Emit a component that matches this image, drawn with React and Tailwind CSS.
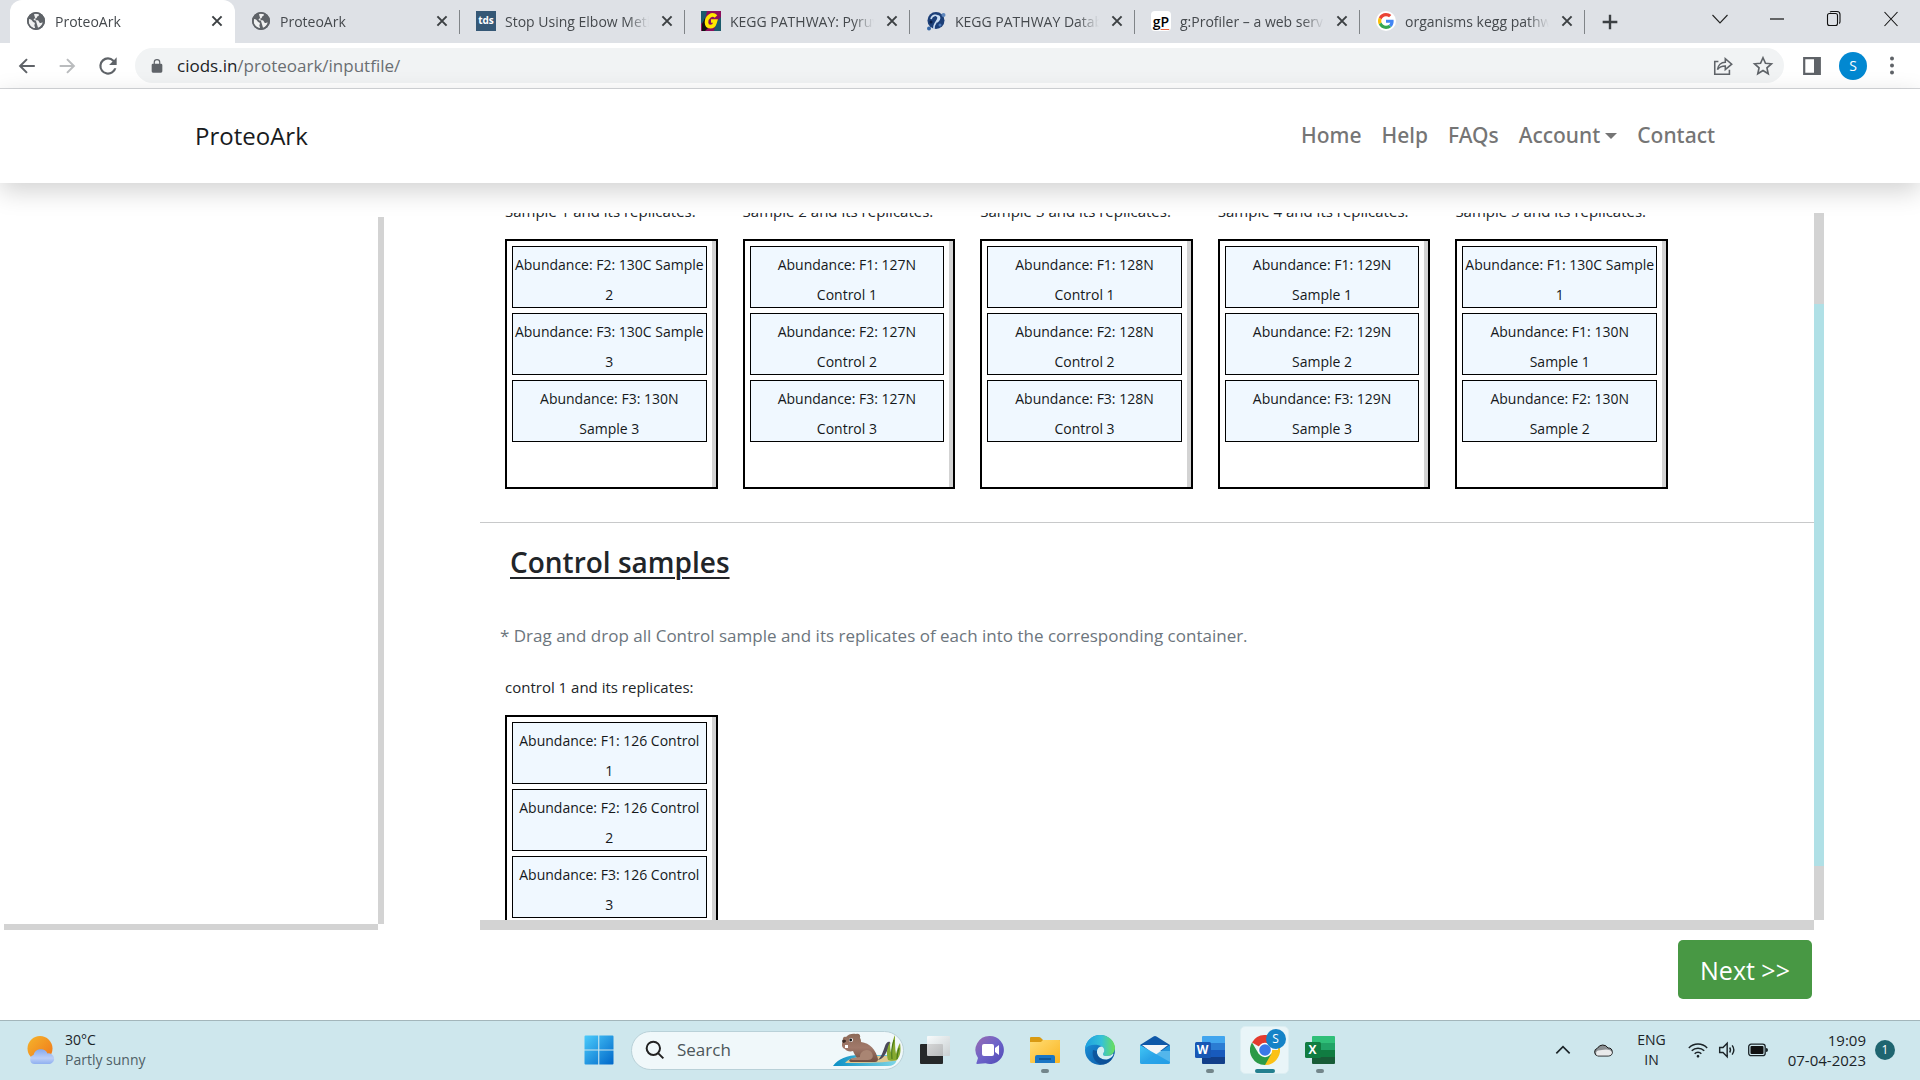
const tabs = [
  { icon: 'globe', title: 'ProteoArk', active: true },
  { icon: 'globe', title: 'ProteoArk' },
  { icon: 'tds', title: 'Stop Using Elbow Method in K' },
  { icon: 'kegg', title: 'KEGG PATHWAY: Pyruvate met' },
  { icon: 'keggdb', title: 'KEGG PATHWAY Database' },
  { icon: 'gp', title: 'g:Profiler – a web server for f' },
  { icon: 'google', title: 'organisms kegg pathway' },
];

const samples = [
  { label: 'Sample 1 and its replicates:', items: [['Abundance: F2: 130C Sample', '2'], ['Abundance: F3: 130C Sample', '3'], ['Abundance: F3: 130N', 'Sample 3']] },
  { label: 'Sample 2 and its replicates:', items: [['Abundance: F1: 127N', 'Control 1'], ['Abundance: F2: 127N', 'Control 2'], ['Abundance: F3: 127N', 'Control 3']] },
  { label: 'Sample 3 and its replicates:', items: [['Abundance: F1: 128N', 'Control 1'], ['Abundance: F2: 128N', 'Control 2'], ['Abundance: F3: 128N', 'Control 3']] },
  { label: 'Sample 4 and its replicates:', items: [['Abundance: F1: 129N', 'Sample 1'], ['Abundance: F2: 129N', 'Sample 2'], ['Abundance: F3: 129N', 'Sample 3']] },
  { label: 'Sample 5 and its replicates:', items: [['Abundance: F1: 130C Sample', '1'], ['Abundance: F1: 130N', 'Sample 1'], ['Abundance: F2: 130N', 'Sample 2']] },
];

const controls = [
  { label: 'control 1 and its replicates:', items: [['Abundance: F1: 126 Control', '1'], ['Abundance: F2: 126 Control', '2'], ['Abundance: F3: 126 Control', '3']] },
];

function Favicon({ kind }) {
  if (kind === 'globe')
    return (
      <svg viewBox="0 0 20 20" className="size-5 shrink-0">
        <circle cx="10" cy="10" r="9" fill="#5f6368" />
        <path d="M3 8c2 .2 3 1 3.500 2.200.5 1 1.800.8 2.300 1.800.4 1-.6 1.700-.4 2.800.1.900.9 1.300.6 2.300C5.500 17 2.800 14 2.700 10.500zM8 3.200c1.500-.6 3.500-.5 5 .2.300 1.200-.9 1.500-1.700 2.100-.6.5-.2 1.400-1 1.800-.9.4-1.900-.1-2.500.7-.5.8.4 1.400 1.300 1.400 1.300 0 2.300-.4 3.300.4.900.8.5 1.900 1.600 2.200.9.200 1.600-.6 2.700-.6-.6 2.500-2.400 4.600-4.700 5.300" fill="#fff" opacity=".9" />
        <circle cx="10" cy="10" r="8.200" fill="none" stroke="#5f6368" strokeWidth="1.600" />
      </svg>
    );
  if (kind === 'tds')
    return <span className="flex size-5 shrink-0 items-center justify-center bg-[#355876] pb-px text-[10px] font-bold text-white">tds</span>;
  if (kind === 'gp')
    return (
      <span className="flex size-5 shrink-0 items-center justify-center rounded-sm bg-white text-[14px] font-semibold text-black">
        g<span className="underline decoration-[#e8603c] underline-offset-2">P</span>
      </span>
    );
  if (kind === 'kegg')
    return (
      <svg viewBox="0 0 20 20" className="size-5 shrink-0">
        <path fill="#8c0f5c" d="M0 0h20v20H0z" />
        <path fill="#1c5b6c" d="M0 0h6L4 9l-4 4zM15 11l5-5v14h-7z" />
        <path fill="#111" d="M1 13l3-6 3 10-3 3H1z" />
        <path d="M15 5.500C11 1.500 5.500 6 5.500 11.500c.2 5.500 7 5.500 8.500.2l.5-1.700H10" fill="none" stroke="#ffe800" strokeWidth="3.600" />
      </svg>
    );
  if (kind === 'keggdb')
    return (
      <svg viewBox="0 0 20 20" className="size-5 shrink-0">
        <circle cx="10" cy="9.500" r="8.500" fill="#1c3f78" />
        <path d="M5 8c1-4 6-5 7-2 1 4-5 6-4 12M10 5c4-1 5 3 1 6" stroke="#c9dcf2" strokeWidth="1.600" fill="none" />
        <circle cx="17.500" cy="4" r="2" fill="#5f87bd" />
        <circle cx="3" cy="17.500" r="2" fill="#3566a5" />
        <circle cx="5" cy="11" r="1.500" fill="#0a1d45" />
        <circle cx="14" cy="14" r="1.500" fill="#4a78b8" />
      </svg>
    );
  return (
    <svg viewBox="0 0 20 20" className="size-5 shrink-0">
      <circle cx="10" cy="10" r="10" fill="#fff" />
      <g transform="translate(2 2) scale(.333)">
        <path fill="#EA4335" d="M24 9.500c3.540 0 6.710 1.220 9.210 3.600l6.850-6.850C35.900 2.380 30.470 0 24 0 14.620 0 6.510 5.380 2.560 13.220l7.980 6.190C12.430 13.720 17.740 9.500 24 9.500z" />
        <path fill="#4285F4" d="M46.980 24.550c0-1.570-.15-3.090-.38-4.550H24v9.020h12.940c-.58 2.960-2.260 5.480-4.780 7.180l7.730 6c4.510-4.180 7.090-10.360 7.090-17.650z" />
        <path fill="#FBBC05" d="M10.530 28.590c-.48-1.450-.76-2.990-.76-4.590s.27-3.140.76-4.590l-7.980-6.190C.92 16.460 0 20.120 0 24c0 3.880.92 7.540 2.560 10.780l7.970-6.190z" />
        <path fill="#34A853" d="M24 48c6.480 0 11.930-2.130 15.890-5.810l-7.730-6c-2.150 1.450-4.920 2.300-8.160 2.300-6.260 0-11.570-4.220-13.470-9.910l-7.980 6.190C6.510 42.620 14.620 48 24 48z" />
      </g>
    </svg>
  );
}

function Glyph({ d, size = 'size-6', color = '#5f6368', w = 2, fill = 'none' }) {
  return (
    <svg viewBox="0 0 24 24" className={`${size} shrink-0`} fill={fill} stroke={color} strokeWidth={w}>
      <path d={d} />
    </svg>
  );
}

function Tab({ tab, divider }) {
  return (
    <div className={`relative flex h-full w-[225px] shrink items-center pb-px pl-4 pr-2 ${tab.active ? 'rounded-t-xl bg-white' : ''}`}>
      <Favicon kind={tab.icon} />
      <a href="#tab" className="ml-[9px] min-w-0 flex-1 overflow-hidden whitespace-nowrap text-[14px] text-[#45494d] [mask-image:linear-gradient(to_right,black_85%,transparent)]">
        {tab.title}
      </a>
      <button type="button" aria-label="Close tab" className="ml-2">
        <Glyph d="M6.500 6.500l11 11M17.500 6.500l-11 11" size="size-5" color="#3c4043" w={2.4} />
      </button>
      {divider && <span className="absolute right-0 top-[10px] h-6 w-px bg-[#808488]" />}
    </div>
  );
}

function BrowserChrome() {
  return (
    <header className="shrink-0 text-[#45494d]">
      <div className="flex h-[43px] items-stretch bg-[#dee1e6] pl-[10px]">
        <nav aria-label="Tabs" className="flex min-w-0">
          {tabs.map((t, i) => (
            <Tab key={i} tab={t} divider={i > 0} />
          ))}
        </nav>
        <button type="button" aria-label="New tab" className="ml-[14px] self-center">
          <Glyph d="M12 4v16M4 12h16" size="size-[22px]" color="#3c4043" w={2.6} />
        </button>
        <div className="ml-auto flex items-center gap-[33px] pb-[5px] pr-[17px]">
          <button type="button" aria-label="Search tabs"><Glyph d="M4.500 8l7.500 8 7.500-8" color="#222" w={1.1} /></button>
          <button type="button" aria-label="Minimize"><Glyph d="M5 12h14" color="#111" w={1.2} /></button>
          <button type="button" aria-label="Restore"><Glyph d="M5.500 8.500a2 2 0 0 1 2-2h6a2 2 0 0 1 2 2v8a2 2 0 0 1-2 2h-6a2 2 0 0 1-2-2zM8 5q.5-.500 1.500-.500h5.500q3 0 3 3v7q0 1.500-.8 2" color="#111" w={1.1} /></button>
          <button type="button" aria-label="Close"><Glyph d="M5.500 5l13 14M18.500 5l-13 14" color="#111" w={1.1} /></button>
        </div>
      </div>
      <div className="flex h-[46px] items-center border-b border-[#d5d7da] bg-white px-4">
        <button type="button" aria-label="Back"><Glyph d="M20.500 12H4M12 4.500L4.500 12l7.500 7.500" size="size-[22px]" w={2.2} /></button>
        <button type="button" aria-label="Forward" className="ml-[18px]"><Glyph d="M4 12h15.500M12 4.500l7.500 7.500-7.500 7.500" size="size-[22px]" color="#babcbe" w={2.2} /></button>
        <button type="button" aria-label="Reload" className="ml-[17px]">
          <svg viewBox="0 0 24 24" className="size-[26px]" fill="#5f6368"><path d="M17.650 6.350A7.960 7.960 0 0 0 12 4a8 8 0 1 0 7.730 10h-2.080A6 6 0 1 1 12 6c1.660 0 3.140.69 4.220 1.780L13 11h7V4z" /></svg>
        </button>
        <div className="ml-[14px] flex h-[35px] min-w-0 flex-1 items-center rounded-full bg-[#f1f3f4] pl-[14px] pr-[10px]">
          <svg viewBox="0 0 24 24" className="size-4 shrink-0" fill="#5f6368"><path d="M18 8.500h-1V6.500a5 5 0 0 0-10 0v2H6a2 2 0 0 0-2 2V20a2 2 0 0 0 2 2h12a2 2 0 0 0 2-2v-9.500a2 2 0 0 0-2-2zm-9.200 0v-2a3.200 3.200 0 0 1 6.400 0v2z" /></svg>
          <p className="ml-3 flex-1 text-[17px] text-[#6a6e72]"><span className="text-[#202124]">ciods.in</span>/proteoark/inputfile/</p>
          <button type="button" aria-label="Share"><Glyph d="M7 7H3v14h16v-5M6 16c.5-5 4-8 8.500-8V4l7 6-7 6v-4c-4 0-6.500 1-8.500 4z" size="size-[22px]" w={1.7} /></button>
          <button type="button" aria-label="Bookmark" className="ml-[18px]"><Glyph d="M12 3l2.700 6 6.500.6-4.900 4.400 1.400 6.500L12 17l-5.700 3.500 1.400-6.500L2.800 9.600l6.500-.6z" size="size-[22px]" w={1.8} /></button>
        </div>
        <button type="button" aria-label="Side panel" className="ml-[19px]">
          <svg viewBox="0 0 18 18" className="size-[18px]"><path d="M1.200 1.200h15.600v15.600H1.200z" fill="#fff" stroke="#5f6368" strokeWidth="2.200" /><path d="M11 1h6v16h-6z" fill="#5f6368" /></svg>
        </button>
        <button type="button" aria-label="Profile" className="ml-[18px] flex size-7 items-center justify-center rounded-full bg-[#0288d1] text-[14px] text-white">S</button>
        <button type="button" aria-label="Menu" className="ml-[13px]">
          <svg viewBox="0 0 24 24" className="size-6" fill="#5f6368"><circle cx="12" cy="4.500" r="2" /><circle cx="12" cy="11.500" r="2" /><circle cx="12" cy="18.500" r="2" /></svg>
        </button>
      </div>
    </header>
  );
}

function ReplicateBox({ group }) {
  return (
    <section className="min-w-0">
      <h3 className="mb-4 text-[15px] leading-6 text-[#212529]">{group.label}</h3>
      <div className="flex h-[250px] border-2 border-black">
        <ul className="flex min-w-0 flex-1 flex-col gap-[5px] p-[5px]">
          {group.items.map(([a, b]) => (
            <li key={a} className="h-[62px] whitespace-nowrap border border-black bg-[#f0f8ff] pt-[3px] text-center text-[14px] leading-[30px] text-[#15181b]">
              {a}
              <br />
              {b}
            </li>
          ))}
        </ul>
        <div className="w-1 bg-[#d3d3d3]" />
      </div>
    </section>
  );
}

function SiteNav() {
  return (
    <div className="relative z-10 flex h-[94px] shrink-0 items-center bg-white pl-[195px] pr-[205px] shadow-[0_8px_24px_rgba(0,0,0,0.18)]">
      <a href="#home" className="text-[24px] text-[#191b1d]">ProteoArk</a>
      <nav className="ml-auto flex items-center gap-5 pb-px font-['Noto_Sans',sans-serif] text-[21px] font-medium text-[#757575]">
        <a href="#home">Home</a>
        <a href="#help">Help</a>
        <a href="#faqs">FAQs</a>
        <a href="#account" className="flex items-center gap-[5px]">
          Account
          <svg viewBox="0 0 12 6" className="h-[6px] w-3" fill="#757575"><path d="M0 0h12L6 6z" /></svg>
        </a>
        <a href="#contact">Contact</a>
      </nav>
    </div>
  );
}

function Workspace() {
  return (
    <main className="flex min-h-0 flex-1 flex-col bg-white">
      <div className="flex h-[747px] shrink-0 pr-24">
        <aside className="flex w-[380px] shrink-0 flex-col pl-1 pt-[34px]">
          <div className="mr-[-4px] flex-1 border-r-[6px] border-[#d3d3d3]" />
          <div className="mr-[2px] h-[6px] bg-[#d3d3d3]" />
        </aside>
        <div className="ml-[100px] flex min-w-0 flex-1 flex-col pt-[30px]">
          <div className="flex min-h-0 flex-1">
            <div className="min-w-0 flex-1 overflow-hidden">
              <div className="-mt-[14px] mb-[33px] ml-[25px] mr-[146px] grid grid-cols-5 gap-[25px]">
                {samples.map((g) => (
                  <ReplicateBox key={g.label} group={g} />
                ))}
              </div>
              <hr className="border-[#c8c9ca]" />
              <h2 className="ml-[30px] mt-[19px] text-[28px] font-semibold leading-10 text-[#212529] underline decoration-2 underline-offset-4">Control samples</h2>
              <p className="ml-5 mt-10 text-[17px] leading-7 text-[#6c757d]">* Drag and drop all Control sample and its replicates of each into the corresponding container.</p>
              <div className="ml-[25px] mr-[146px] mt-[25px] grid grid-cols-5 gap-[25px]">
                {controls.map((g) => (
                  <ReplicateBox key={g.label} group={g} />
                ))}
              </div>
            </div>
            <div className="w-[10px] shrink-0 bg-[#d3d3d3] pt-[91px]">
              <div className="h-[562px] bg-[#b0e0e6]" />
            </div>
          </div>
          <div className="mr-[10px] h-[10px] shrink-0 bg-[#d3d3d3]" />
        </div>
      </div>
      <div className="mt-[10px] flex justify-end pr-[108px]">
        <button type="button" className="h-[59px] w-[134px] rounded-[5px] bg-[#489844] pt-[2px] text-[25px] text-white">Next &gt;&gt;</button>
      </div>
    </main>
  );
}

function Defs() {
  return (
    <svg className="absolute size-0" aria-hidden="true">
      <defs>
        <linearGradient id="sun" x1="0" y1="0" x2="1" y2="1"><stop stopColor="#f5b52b" /><stop offset="1" stopColor="#f0741a" /></linearGradient>
        <linearGradient id="cloud" x1="0" y1="0" x2="0" y2="1"><stop stopColor="#86a9ee" /><stop offset=".6" stopColor="#bccff7" /><stop offset="1" stopColor="#8fb0f0" /></linearGradient>
        <linearGradient id="win" x1="0" y1="0" x2="1" y2="1"><stop stopColor="#4bcbfb" /><stop offset="1" stopColor="#0067c9" /></linearGradient>
        <linearGradient id="fur" x1="0" y1="0" x2="0" y2="1"><stop stopColor="#8c6a58" /><stop offset=".5" stopColor="#a1796a" /><stop offset="1" stopColor="#6f4d3f" /></linearGradient>
        <linearGradient id="water" x1="0" y1="0" x2="1" y2="0"><stop stopColor="#0a8fc4" /><stop offset="1" stopColor="#7fd6e6" /></linearGradient>
        <linearGradient id="chat" x1="0" y1="0" x2="1" y2="1"><stop stopColor="#9a6bb0" /><stop offset=".5" stopColor="#6d63c9" /><stop offset="1" stopColor="#5049b5" /></linearGradient>
        <linearGradient id="folder" x1="0" y1="0" x2="1" y2="1"><stop stopColor="#ffdc73" /><stop offset="1" stopColor="#fbb521" /></linearGradient>
        <linearGradient id="edgeTop" x1="0" y1="0" x2="1" y2="0"><stop stopColor="#1d9fe0" /><stop offset=".55" stopColor="#35c1d8" /><stop offset="1" stopColor="#6be058" /></linearGradient>
        <linearGradient id="edgeLow" x1="0" y1="0" x2="1" y2="1"><stop stopColor="#1c9ae0" /><stop offset="1" stopColor="#0b4f9e" /></linearGradient>
        <linearGradient id="mail" x1="0" y1="0" x2="1" y2="1"><stop stopColor="#42c8f6" /><stop offset="1" stopColor="#1582d8" /></linearGradient>
        <linearGradient id="pane" x1="0" y1="0" x2="1" y2="1"><stop stopColor="#ffffff" /><stop offset="1" stopColor="#c9cccd" /></linearGradient>
      </defs>
    </svg>
  );
}

function Beaver() {
  return (
    <svg viewBox="0 0 70 36" className="h-9 w-[70px] shrink-0">
      <path d="M0 34C5 27 14 23 26 23h36c3 4 2 11-7 11z" fill="url(#water)" />
      <path d="M12 31c4-5 14-7 26-7h26c1 3 0 5-3 5-15 2-32 2-49 2z" fill="#e0c990" />
      <path d="M45 28c3-3 5-8 7-14 1-3 3-5 5-4 1 2-1 6-3 9-2 4-4 8-9 9z" fill="#4b4a5a" />
      <path d="M10 9c-1-3 1-5 3-4 2-3 7-4 10-3 3-1 5 1 4 4 1 1 1 3 1 4 9 1 15 8 17 17 0 2-1 3-3 3H19c-3 0-4-2-1-3l6-1c-1-2-3-4-4-7-3 1-7 0-8-2-3-1-4-4-2-8z" fill="url(#fur)" />
      <path d="M28 21c3-4 9-4 11 0 2 4 0 7-4 7H20c-3 0-2-2 0-2l7-1c0-1 0-3 1-4z" fill="#a98573" />
      <circle cx="18" cy="8" r="2" fill="#fff" />
      <circle cx="17.700" cy="8" r="1.400" fill="#111" />
      <path d="M9 9c1-2 4-1 4 0s-2 2-3 2z" fill="#3b2a24" />
      <path d="M12 13h3v3h-3z" fill="#fff" />
      <path d="M55 28c-2-7-1-12 2-18 0 7 1 11 2 14 0-8 0-15 3-21 0 8 0 14 1 19 1-4 2-8 4-11 1 7 1 12-3 17-3 1-7 1-9 0z" fill="#86a92f" />
      <path d="M59 27c-1-7 0-13 2-19M64 27c0-5 1-8 2-11" stroke="#4a7a1c" fill="none" strokeWidth="1.200" />
    </svg>
  );
}

function OfficeIcon({ letter, shades, base }) {
  return (
    <span className="relative block size-[30px]">
      <svg viewBox="0 0 30 30" className="size-[30px]">
        <path fill={shades[0]} d="M8 1h21q1 0 1 1v6H7V2q0-1 1-1z" />
        <path fill={shades[1]} d="M7 8h23v7H7z" />
        <path fill={shades[2]} d="M7 15h23v7H7z" />
        <path fill={shades[3]} d="M7 22h23v6q0 1-1 1H8q-1 0-1-1z" />
        <rect x="0" y="7" width="16" height="16" rx="1.500" fill={base} />
      </svg>
      <span className="absolute left-0 top-[7px] w-4 text-center text-[12px] font-bold leading-4 text-white">{letter}</span>
    </span>
  );
}

const apps = [
  {
    name: 'Chat',
    icon: (
      <svg viewBox="0 0 30 30" className="size-[30px]">
        <path d="M15 1a14 14 0 1 1-4.500 27.300L2 29q-1-.5-.4-1.500L3 23A14 14 0 0 1 15 1z" fill="url(#chat)" />
        <rect x="7" y="9" width="12" height="12" rx="2" fill="#fff" />
        <path d="M20 13l4-3v10l-4-3z" fill="#fff" />
      </svg>
    ),
  },
  {
    name: 'File Explorer',
    open: true,
    icon: (
      <svg viewBox="0 0 30 30" className="size-[30px]">
        <path d="M0 3q0-1 1-1h8q1 0 2 1l2 2H29q1 0 1 1v8H0z" fill="#d99a12" />
        <path d="M0 7h11l2-2h16q1 0 1 1v21q0 1-1 1H1q-1 0-1-1z" fill="url(#folder)" />
        <path d="M5 28v-6q0-2 2-2h16q2 0 2 2v6z" fill="#1a76c4" />
        <path d="M9 24h12" stroke="#0c4f8d" strokeWidth="1.500" />
      </svg>
    ),
  },
  {
    name: 'Edge',
    icon: (
      <svg viewBox="0 0 30 30" className="size-[30px]">
        <circle cx="15" cy="15" r="15" fill="url(#edgeLow)" />
        <path d="M0 14C1 5 8 0 15 0c9 0 15 6.500 15 13 0 5-4 8-8.500 8-3.500 0-4-1.500-3-3 1.500-2 1-5-1.500-6.500C12 8.500 3 9 0 14z" fill="url(#edgeTop)" />
        <path d="M18.500 18c-1 1.500-.5 3 3 3 3 0 5-.8 6.800-2.500C29 21 24 25 19.500 24.500 14 24 11.500 20 12 16c.3-2.500 2-4.500 5-4.500 2.500 1.500 3 4.500 1.500 6.500z" fill="#d5eef3" />
        <path d="M8 15c-2 8 4 15 11 14.500 4-1 7-3.500 8.500-6.500-3 2-6 2.500-9 1.500C14 23 11.500 20 12 16z" fill="#0c4c92" opacity=".75" />
      </svg>
    ),
  },
  {
    name: 'Mail',
    icon: (
      <svg viewBox="0 0 30 30" className="size-[30px]">
        <path d="M0 10L13.500 1.500q1.500-1 3 0L30 10v6H0z" fill="#0f58a8" />
        <path d="M2 10h26L15 20z" fill="#f4f6f8" />
        <path d="M0 10l30 17q0 2-1.500 2h-27Q0 29 0 27.500z" fill="url(#mail)" />
        <path d="M30 10L2 28.900H28.500Q30 29 30 27.500z" fill="#2aa5ea" opacity=".75" />
      </svg>
    ),
  },
  { name: 'Word', open: true, icon: <OfficeIcon letter="W" base="#1857b4" shades={['#41a5ee', '#2b7cd3', '#185abd', '#123f8a']} /> },
  {
    name: 'Chrome',
    current: true,
    icon: (
      <span className="relative block size-[30px]">
        <svg viewBox="0 0 30 30" className="size-[30px]">
          <path d="M15 15L2 7.500A15 15 0 0 1 28 7.500z" fill="#e33b2e" />
          <path d="M15 15h13L28 7.500A15 15 0 0 1 15 30l-1-8z" fill="#fbc116" />
          <path d="M2 7.500L8.500 18.500 21.500 18.500 15 30A15 15 0 0 1 2 7.500z" fill="#2b9a47" />
          <circle cx="15" cy="15" r="7.200" fill="#fff" />
          <circle cx="15" cy="15" r="5.800" fill="#3b78e7" />
        </svg>
        <span className="absolute -right-[6px] -top-[6px] flex size-5 items-center justify-center rounded-full bg-[#1583c7] text-[12px] text-white">S</span>
      </span>
    ),
  },
  { name: 'Excel', open: true, icon: <OfficeIcon letter="X" base="#107c41" shades={['#2fbf78', '#21a366', '#107c41', '#185c37']} /> },
];

function Taskbar() {
  return (
    <footer className="grid h-[60px] shrink-0 grid-cols-[1fr_auto_1fr] items-center border-t border-[#a3b6bb] bg-[#cee7ed] pb-px text-[#1b2428]">
      <button type="button" className="flex items-center gap-[9px] justify-self-start pl-[26px] text-left text-[14px] leading-5">
        <svg viewBox="0 0 30 30" className="size-[30px]">
          <circle cx="14" cy="13.500" r="12.500" fill="url(#sun)" />
          <path d="M8.500 29a4.600 4.600 0 0 1-1-9A7.500 7.500 0 0 1 21.500 18.500 5.300 5.300 0 0 1 24 29z" fill="url(#cloud)" />
        </svg>
        <span>30°C<br /><span className="text-[#4f6066]">Partly sunny</span></span>
      </button>
      <nav aria-label="Taskbar" className="flex items-center pl-[14px]">
        <button type="button" aria-label="Start">
          <svg viewBox="0 0 30 30" className="size-[30px]" fill="url(#win)"><path d="M1.500.5h12.700v14H.5v-13q0-1 1-1zM15.300.5h13.200q1 0 1 1v13H15.300zM.5 15.500h13.700v14H1.500q-1 0-1-1zM15.300 15.500h14.200v13q0 1-1 1H15.300z" /></svg>
        </button>
        <label className="ml-[17px] flex h-[39px] w-[273px] items-center overflow-hidden rounded-full border border-[#b9d1d8] bg-[#f0f8fa] pl-[13px]">
          <Glyph d="M16 16l6 6M18 10a8 8 0 1 1-16 0 8 8 0 0 1 16 0z" size="size-5" color="#222" w={2.4} />
          <input type="search" aria-label="Search" placeholder="Search" className="ml-3 w-0 min-w-0 flex-1 bg-transparent text-[17px] outline-none placeholder:text-[#4c5659]" />
          <Beaver />
        </label>
        <button type="button" aria-label="Task view" className="ml-4 mr-[15px]">
          <svg viewBox="0 0 30 30" className="size-[30px]">
            <rect x="0" y="9" width="23" height="20" rx="1" fill="#262829" />
            <rect x="7" y="1" width="23" height="20" rx="1" fill="url(#pane)" opacity=".85" />
          </svg>
        </button>
        {apps.map((a) => (
          <button
            key={a.name}
            type="button"
            aria-label={a.name}
            className={`relative mr-[6px] flex h-12 w-[49px] items-center justify-center rounded-[5px] ${a.current ? 'border border-[#dceef2] bg-[#e9f5f8]' : ''}`}
          >
            {a.icon}
            {a.open && <span className="absolute bottom-px h-1 w-2 rounded-full bg-[#73868b]" />}
            {a.current && <span className="absolute bottom-0 h-1 w-5 rounded-full bg-[#23808f]" />}
          </button>
        ))}
      </nav>
      <div className="flex items-center justify-self-end pr-[25px] text-[15px] leading-5">
        <button type="button" aria-label="Hidden icons"><Glyph d="M4 16l8-8 8 8" size="size-5" color="#1b2428" w={2} /></button>
        <svg viewBox="0 0 20 14" className="ml-5 h-[14px] w-5">
          <path d="M5 13a4 4 0 0 1-.5-7.800A6 6 0 0 1 15 5a4 4 0 0 1 .5 8z" fill="#8a8f92" stroke="#1b1b1b" strokeWidth="1" />
          <path d="M4 12.500a3 3 0 0 1 1-5l8-1q5 0 6 3-.5 3-3.500 3z" fill="#e9eaeb" />
        </svg>
        <button type="button" className="ml-6 text-center text-[14px]">ENG<br />IN</button>
        <button type="button" aria-label="Network, volume and battery" className="ml-[22px] flex items-center gap-[10px]">
          <Glyph d="M1 9.500a15.500 15.500 0 0 1 22 0M4.500 13a10.500 10.500 0 0 1 15 0M8 16.500a5.600 5.600 0 0 1 8 0M11.500 20a.7.700 0 1 1 1 0z" size="size-5" color="#1b2428" w={1.8} />
          <Glyph d="M2 9v6h4l5 5V4L6 9zM14 9q2 3 0 6M17 6.500q4 5.500 0 11" size="size-5" color="#1b2428" w={1.7} />
          <svg viewBox="0 0 20 14" className="h-[14px] w-5"><rect x=".7" y="1.200" width="16.500" height="11.500" rx="2.500" fill="none" stroke="#1b2428" strokeWidth="1.300" /><rect x="2.500" y="3" width="13" height="8" rx="1" fill="#111" /><path d="M18 5q2 0 2 2t-2 2z" fill="#1b2428" /></svg>
        </button>
        <button type="button" className="ml-5 text-right">19:09<br />07-04-2023</button>
        <span className="ml-[9px] flex size-5 items-center justify-center rounded-full bg-[#1f6570] text-[12px] text-white">1</span>
      </div>
    </footer>
  );
}

export default function App() {
  return (
    <div className="flex min-h-screen flex-col bg-white font-['Open_Sans','Noto_Sans',sans-serif]">
      <Defs />
      <BrowserChrome />
      <SiteNav />
      <Workspace />
      <Taskbar />
    </div>
  );
}
